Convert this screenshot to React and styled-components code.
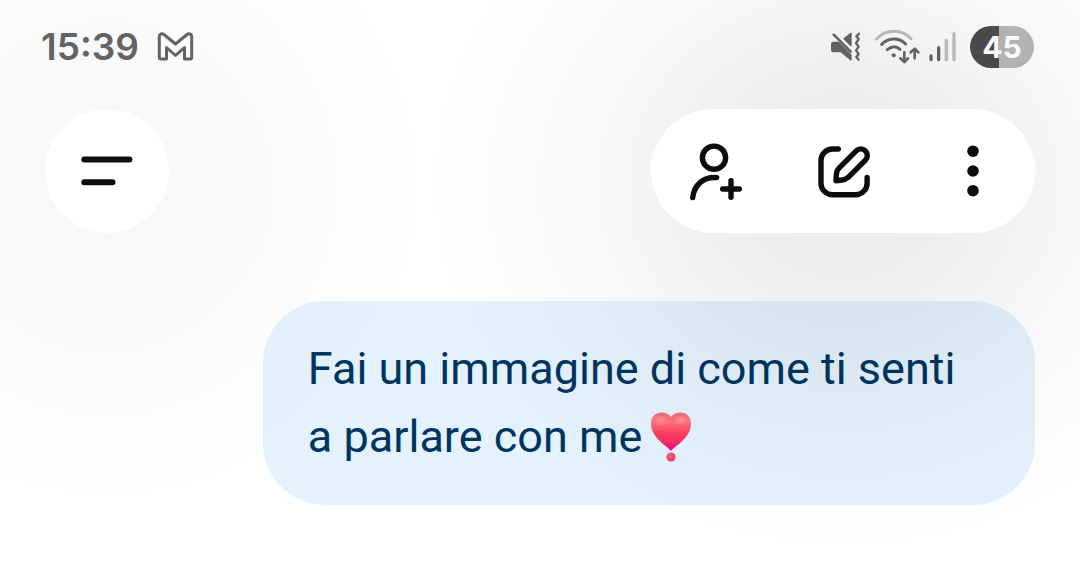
import React from "react";
import styled, { createGlobalStyle } from "styled-components";

const GlobalStyle = createGlobalStyle`
  *, *::before, *::after { box-sizing: border-box; }
  body {
    margin: 0;
    background: #fff;
    font-family: Roboto, "Noto Sans", sans-serif;
    overflow-x: hidden;
  }
`;

const Screen = styled.div`
  min-height: 100vh;
  overflow: hidden;
`;

const StatusBar = styled.header`
  position: relative;
  z-index: 2;
  display: flex;
  justify-content: space-between;
  align-items: center;
  padding: 26px 46px 0 41px;
  color: #636363;
`;

const StatusGroup = styled.div`
  display: flex;
  align-items: center;
  gap: ${(p) => p.$gap}px;
`;

const Clock = styled.time`
  font: 600 37px/42px Inter, Roboto, sans-serif;
`;

const Battery = styled.div`
  width: 64px;
  height: 42px;
  border-radius: 21px;
  background: linear-gradient(to right, #4a4a4a 45%, #b2b2b2 45%);
  color: #fafafa;
  font: 700 30px/42px Inter, Roboto, sans-serif;
  text-align: center;
`;

const Toolbar = styled.nav`
  position: relative;
  z-index: 1;
  display: flex;
  justify-content: space-between;
  padding: 41px 45px 0;
  pointer-events: none;
`;

const wideGlow = `radial-gradient(closest-side,
  rgba(0, 0, 0, 0.082), rgba(0, 0, 0, 0.076) 16%, rgba(0, 0, 0, 0.06) 33%,
  rgba(0, 0, 0, 0.044) 47%, rgba(0, 0, 0, 0.029) 60%, rgba(0, 0, 0, 0.018) 72%,
  rgba(0, 0, 0, 0.007) 88%, transparent)`;

const roundGlow = `radial-gradient(closest-side,
  rgba(0, 0, 0, 0.032), rgba(0, 0, 0, 0.028) 25%, rgba(0, 0, 0, 0.018) 50%,
  rgba(0, 0, 0, 0.008) 75%, transparent)`;

const Pill = styled.div`
  position: relative;
  display: flex;
  border-radius: 62px;
  background: #fff;
  pointer-events: auto;

  &::before {
    content: "";
    position: absolute;
    z-index: -1;
    inset: ${(p) => (p.$wide ? "-294px -228px -322px" : "-254px -268px -282px")};
    background: ${(p) => (p.$wide ? wideGlow : roundGlow)};
    pointer-events: none;
  }
`;

const IconButton = styled.button`
  display: grid;
  place-items: center;
  width: ${(p) => p.$width}px;
  height: 124px;
  padding: 0;
  border: 0;
  border-radius: 62px;
  background: transparent;
  color: #0d0d0d;
  cursor: pointer;
`;

const Conversation = styled.main`
  padding: 68px 45px;
`;

const Bubble = styled.p`
  width: fit-content;
  max-width: 78%;
  margin: 0 0 0 auto;
  padding: 34px 45px;
  border-radius: 62px;
  background: #e4f2fe;
  color: #00355f;
  font-size: 45px;
  line-height: 68px;
`;

const HeartGlyph = styled.svg`
  margin-left: 8px;
  vertical-align: -10px;
`;

const MailIcon = () => (
  <svg width="40" height="32" viewBox="156 31 40 32" fill="none" stroke="currentColor" strokeWidth="3" strokeLinejoin="round" aria-label="Gmail" role="img">
    <path d="M159.3 36.5V57.3Q159.3 59 161 59H166.500V47.500L175.5 55.500L184.500 47.500V59H190Q191.7 59 191.7 57.3V36.5C191.7 34 189 33 187 34.5L175.5 44L164 34.5C162 33 159.3 34 159.3 36.5Z" />
  </svg>
);

const MuteIcon = () => (
  <svg width="34" height="36" viewBox="30 42 102 108" aria-label="Vibrazione" role="img">
    <g fill="currentColor" stroke="currentColor" strokeLinecap="round" strokeLinejoin="round">
      <path strokeWidth="4" d="M37 82H55L93 120V135L63 110H40Q35 110 35 105V87Q35 82 40 82Z" />
      <path strokeWidth="4" d="M93 55V92L72 71Z" />
      <path strokeWidth="8" fill="none" d="M41 59L92 110" />
      <path strokeWidth="7" fill="none" d="M117 56L109 64L116 73L108 84L116 95L108 106L116 117L109 126L116 134" />
    </g>
  </svg>
);

const WifiIcon = () => (
  <svg width="44" height="36" viewBox="162 42 132 108" overflow="visible" aria-label="Wi-Fi" role="img">
    <g fill="none" stroke="currentColor" strokeWidth="9" strokeLinecap="round" strokeLinejoin="round">
      <path stroke="#b8b8b8" d="M169 72C199 41 244 41 273 71" />
      <path d="M185 88C206 67 237 67 257 87" />
      <path d="M202 104C214 93 229 93 240 103" />
      <path strokeWidth="8" d="M253 112V138M241 130L253 141L264 130M284 130V103M272 112L284 101L295 112" />
    </g>
    <circle cx="221" cy="121" r="6" fill="currentColor" />
  </svg>
);

const SignalIcon = () => (
  <svg width="32" height="36" viewBox="324 42 96 108" aria-label="Segnale" role="img">
    <g fill="none" strokeWidth="10" strokeLinecap="round">
      <path stroke="currentColor" d="M333 123V134M356 98V134" />
      <path stroke="#b8b8b8" d="M379 76V134M402 56V134" />
    </g>
  </svg>
);

const MenuIcon = () => (
  <svg width="64" height="64" viewBox="75 139 64 64" fill="none" stroke="currentColor" strokeWidth="6" strokeLinecap="round" aria-hidden="true">
    <path d="M84.3 159.5H129.4M84.3 182.3H112.5" />
  </svg>
);

const AddPersonIcon = () => (
  <svg width="64" height="64" viewBox="683 139 64 64" fill="none" stroke="currentColor" strokeWidth="5.4" strokeLinecap="round" aria-hidden="true">
    <circle cx="714" cy="157.7" r="11.6" />
    <path d="M692.7 197.6C694 185.5 703 176.5 716.7 177.6M722.7 189H739.3M731 180.7V197.3" />
  </svg>
);

const ComposeIcon = () => (
  <svg width="64" height="64" viewBox="811 139 64 64" fill="none" stroke="currentColor" strokeWidth="5.4" strokeLinecap="round" strokeLinejoin="round" aria-hidden="true">
    <path d="M838.3 149H832.5A11.5 11.5 0 0 0 821 160.5V183.3A11.5 11.5 0 0 0 832.5 194.8H855.6A11.5 11.5 0 0 0 867.1 183.3V177.5" />
    <path d="M839 168.2L856.2 150.9A6.5 6.5 0 0 1 865.4 160.1L848.2 177.3Q845.5 179.7 842 180L836 180.7L836.4 174Q836.7 170.5 839 168.2Z" />
  </svg>
);

const MoreIcon = () => (
  <svg width="64" height="64" viewBox="939 139 64 64" fill="currentColor" aria-hidden="true">
    <circle cx="973" cy="151.2" r="5.8" />
    <circle cx="973" cy="171" r="5.8" />
    <circle cx="973" cy="190.7" r="5.8" />
  </svg>
);

const HeartExclamation = () => (
  <HeartGlyph width="42" height="50" viewBox="0 0 42 50" role="img" aria-label="❣️">
    <defs>
      <linearGradient id="heart" x1="0" y1="0" x2="0" y2="1">
        <stop offset="0" stopColor="#ee6c78" />
        <stop offset="0.25" stopColor="#ff7480" />
        <stop offset="0.5" stopColor="#fb4562" />
        <stop offset="0.78" stopColor="#f52d62" />
        <stop offset="1" stopColor="#e900a0" />
      </linearGradient>
      <radialGradient id="shine">
        <stop offset="0" stopColor="#ffa8a5" stopOpacity="0.7" />
        <stop offset="1" stopColor="#ff8088" stopOpacity="0" />
      </radialGradient>
    </defs>
    <path fill="url(#heart)" d="M21 39C18.5 35 1 26 1 12C1 4.5 5.5 0.5 11.5 0.5C16 0.5 19 2 21 5C23 2 26 0.5 30.5 0.5C36.5 0.5 41 4.5 41 12C41 26 23.5 35 21 39Z" />
    <ellipse cx="11" cy="8" rx="9" ry="6" fill="url(#shine)" />
    <ellipse cx="31" cy="8" rx="9" ry="6" fill="url(#shine)" />
    <circle cx="21" cy="45" r="4.6" fill="#ef4668" />
    <circle cx="20.5" cy="43.8" r="2.4" fill="#fb6078" />
  </HeartGlyph>
);

export default function App() {
  return (
    <Screen>
      <GlobalStyle />
      <StatusBar>
        <StatusGroup $gap={17}>
          <Clock>15:39</Clock>
          <MailIcon />
        </StatusGroup>
        <StatusGroup $gap={10}>
          <MuteIcon />
          <WifiIcon />
          <SignalIcon />
          <Battery>45</Battery>
        </StatusGroup>
      </StatusBar>
      <Toolbar>
        <Pill>
          <IconButton $width={124} type="button" aria-label="Menu">
            <MenuIcon />
          </IconButton>
        </Pill>
        <Pill $wide>
          <IconButton $width={128} type="button" aria-label="Aggiungi persona">
            <AddPersonIcon />
          </IconButton>
          <IconButton $width={128} type="button" aria-label="Nuova chat">
            <ComposeIcon />
          </IconButton>
          <IconButton $width={128} type="button" aria-label="Altro">
            <MoreIcon />
          </IconButton>
        </Pill>
      </Toolbar>
      <Conversation>
        <Bubble>
          Fai un immagine di come ti senti a parlare con me
          <HeartExclamation />
        </Bubble>
      </Conversation>
    </Screen>
  );
}
